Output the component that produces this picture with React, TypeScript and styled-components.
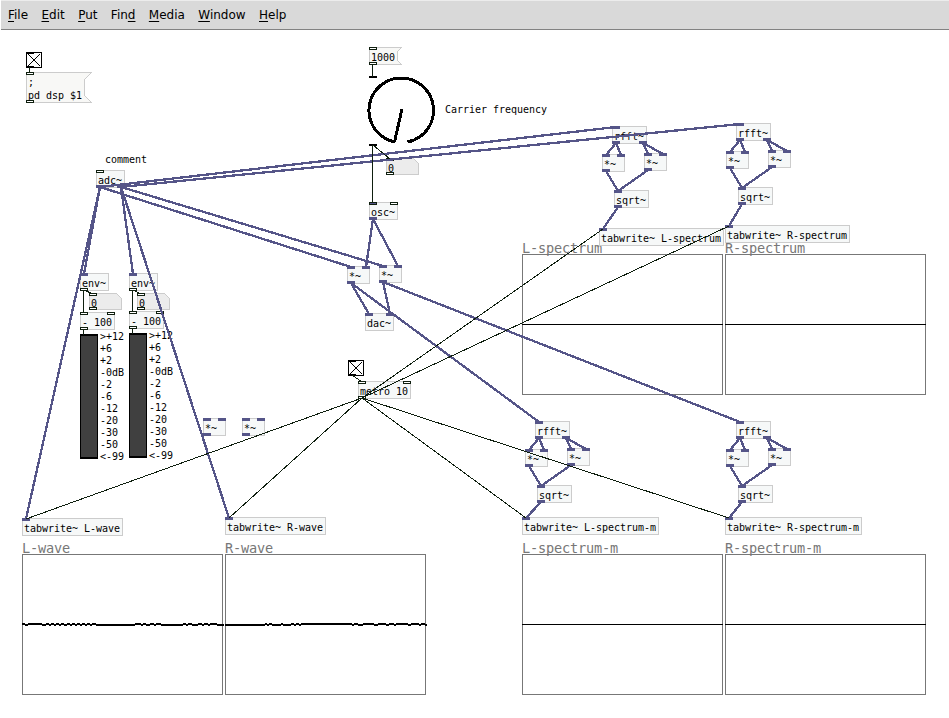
import React from "react";
import styled, { createGlobalStyle } from "styled-components";

const GlobalStyle = createGlobalStyle`
  body { margin: 0; background: #fff; overflow: hidden; }
`;

const SIGNAL = "#555588";
const CONTROL = "#0f1f0f";

const Window = styled.div`
  display: flex;
  flex-direction: column;
  width: 949px;
  height: 718px;
  background: #fff;
`;

const MenuBar = styled.nav`
  display: flex;
  flex: none;
  gap: 13.4px;
  height: 30px;
  box-sizing: border-box;
  margin-left: 1px;
  padding: 0 7px;
  background: #d9d9d9;
  border-top: 1px solid #ececec;
  border-bottom: 1px solid #828282;
  font: 12px/29px "DejaVu Sans", sans-serif;
  color: #000;
`;

const MenuItem = styled.span`
  u { text-underline-offset: 2px; text-decoration-thickness: 1px; }
`;

const Canvas = styled.main`
  position: relative;
  flex: 1;
  overflow: hidden;
  font: 10px/12px "DejaVu Sans Mono", monospace;
  letter-spacing: -0.02px;
  color: #000;
`;

/* Patch coordinates are window coordinates; the menu takes the first 30px. */
const at = (p: { $x: number; $y: number }) => `left: ${p.$x}px; top: ${p.$y - 30}px;`;

const Node = styled.div<{ $x: number; $y: number; $w: number }>`
  position: absolute;
  ${at}
  width: ${(p) => p.$w}px;
  height: 18px;
  box-sizing: border-box;
  border: 1px solid #ccc;
  background: #f6f8f8;
  padding: 4px 0 0 1px;
  white-space: pre;
`;

const Port = styled.i<{ $x: number; $bottom?: boolean; $kind: string }>`
  position: absolute;
  left: ${(p) => p.$x - 1}px;
  ${(p) => (p.$bottom ? "bottom: -1px;" : "top: -1px;")}
  width: 8px;
  height: 3px;
  box-sizing: border-box;
  border: 1px solid ${(p) => (p.$kind === "s" ? SIGNAL : CONTROL)};
  background: ${(p) => (p.$kind === "c" ? "#fff" : SIGNAL)};
`;

const Note = styled.span<{ $x: number; $y: number }>`
  position: absolute;
  ${at}
  white-space: pre;
`;

const ArrayPlot = styled.section<{ $x: number; $y: number }>`
  position: absolute;
  ${at}
  width: 201px;
  height: 141px;
  box-sizing: border-box;
  border: 1px solid #777;
`;

const ArrayName = styled.h2`
  position: absolute;
  left: -1px;
  top: -15px;
  margin: 0;
  font: 13.6px/16px "DejaVu Sans Mono", monospace;
  letter-spacing: -0.187px;
  color: #777;
`;

const Meter = styled.div<{ $x: number; $y: number }>`
  position: absolute;
  ${at}
  display: flex;
  gap: 2px;
`;

const MeterBar = styled.div`
  width: 18px;
  height: 125px;
  box-sizing: border-box;
  border: solid #000;
  border-width: 2px 1px;
  background: #404040;
`;

const MeterScale = styled.div`
  display: flex;
  flex-direction: column;
  margin-top: -3px;
`;

const Drawing = styled.svg`
  position: absolute;
  left: 0;
  top: 0;
  width: 949px;
  height: 688px;
  pointer-events: none;
`;

type Obj = [x: number, y: number, text: string, ins: string, outs: string];

const objects: Obj[] = [
  [96, 170, "adc~", "c", "ss"],
  [80, 273, "env~", "s", "c"],
  [129, 273, "env~", "s", "c"],
  [80, 312, "- 100", "cc", "c"],
  [129, 311, "- 100", "cc", "c"],
  [369, 202, "osc~", "mc", "s"],
  [347, 266, "*~", "ss", "s"],
  [379, 265, "*~", "ss", "s"],
  [365, 313, "dac~", "ss", ""],
  [358, 381, "metro 10", "cc", "c"],
  [203, 418, "*~", "ss", "s"],
  [242, 418, "*~", "ss", "s"],
  [612, 126, "rfft~", "s", "ss"],
  [602, 154, "*~", "ss", "s"],
  [644, 153, "*~", "ss", "s"],
  [614, 190, "sqrt~", "s", "s"],
  [599, 228, "tabwrite~ L-spectrum", "s", ""],
  [736, 123, "rfft~", "s", "ss"],
  [726, 151, "*~", "ss", "s"],
  [768, 150, "*~", "ss", "s"],
  [738, 187, "sqrt~", "s", "s"],
  [725, 225, "tabwrite~ R-spectrum", "s", ""],
  [535, 421, "rfft~", "s", "ss"],
  [525, 449, "*~", "ss", "s"],
  [567, 448, "*~", "ss", "s"],
  [537, 485, "sqrt~", "s", "s"],
  [522, 517, "tabwrite~ L-spectrum-m", "s", ""],
  [736, 421, "rfft~", "s", "ss"],
  [726, 449, "*~", "ss", "s"],
  [768, 448, "*~", "ss", "s"],
  [738, 485, "sqrt~", "s", "s"],
  [725, 517, "tabwrite~ R-spectrum-m", "s", ""],
  [22, 518, "tabwrite~ L-wave", "s", ""],
  [225, 517, "tabwrite~ R-wave", "s", ""],
];

const arrays: [number, number, string][] = [
  [22, 554, "L-wave"],
  [225, 554, "R-wave"],
  [522, 254, "L-spectrum"],
  [725, 254, "R-spectrum"],
  [522, 554, "L-spectrum-m"],
  [725, 554, "R-spectrum-m"],
];

const signalWires = [
  [100, 187, 84, 274], [100, 187, 26, 519], [100, 187, 351, 267], [100, 187, 616, 127],
  [121, 187, 133, 274], [121, 187, 229, 518], [121, 187, 383, 266], [121, 187, 740, 124],
  [373, 219, 366, 267], [373, 219, 398, 266],
  [351, 283, 369, 314], [351, 283, 539, 422],
  [383, 282, 390, 314], [383, 282, 740, 422],
  [616, 143, 606, 155], [616, 143, 621, 155], [643, 143, 648, 154], [643, 143, 663, 154],
  [606, 171, 618, 191], [648, 170, 618, 191], [618, 207, 603, 229],
  [740, 140, 730, 152], [740, 140, 745, 152], [767, 140, 772, 151], [767, 140, 787, 151],
  [730, 168, 742, 188], [772, 167, 742, 188], [742, 204, 729, 226],
  [539, 438, 529, 450], [539, 438, 544, 450], [566, 438, 571, 449], [566, 438, 586, 449],
  [529, 466, 541, 486], [571, 465, 541, 486], [541, 502, 526, 518],
  [740, 438, 730, 450], [740, 438, 745, 450], [767, 438, 772, 449], [767, 438, 787, 449],
  [730, 466, 742, 486], [772, 465, 742, 486], [742, 502, 729, 518],
];

const controlWires = [
  [29.5, 67, 29.5, 73], [372.5, 64, 372.5, 77], [372.5, 145, 372.5, 203], [373, 145, 390, 159],
  [83.5, 290, 83.5, 313], [84, 290, 93, 294], [132.5, 290, 132.5, 312], [133, 290, 141, 294],
  [83.5, 329, 83.5, 335], [132.5, 328, 132.5, 334],
  [352, 375, 362, 382],
  [362, 398, 26, 519], [362, 398, 229, 518], [362, 398, 526, 518], [362, 398, 729, 518],
  [362, 398, 603, 229], [362, 398, 729, 226],
];

const levels = [">+12", "+6", "+2", "-0dB", "-2", "-6", "-12", "-20", "-30", "-50", "<-99"];
const menus: [string, string, string][] = [
  ["", "F", "ile"], ["", "E", "dit"], ["", "P", "ut"], ["Fin", "d", ""],
  ["", "M", "edia"], ["", "W", "indow"], ["", "H", "elp"],
];

const portX = (i: number, n: number, w: number) => (n < 2 ? 0 : (i * (w - 8)) / (n - 1));

function PatchObject({ obj: [x, y, text, ins, outs] }: { obj: Obj }) {
  const w = Math.max(3, text.length) * 6 + 5;
  return (
    <Node $x={x} $y={y} $w={w}>
      {text}
      {[...ins].map((k, i) => <Port key={`i${i}`} $x={portX(i, ins.length, w)} $kind={k} />)}
      {[...outs].map((k, i) => <Port key={`o${i}`} $x={portX(i, outs.length, w)} $kind={k} $bottom />)}
    </Node>
  );
}

const Pin = ({ x, y }: { x: number; y: number }) => (
  <rect x={x + 0.5} y={y + 0.5} width="7" height="2" fill="#fff" stroke={CONTROL} />
);

function MessageShape({ x, y, w, h }: { x: number; y: number; w: number; h: number }) {
  const r = x + w + 0.5;
  const t = y + 0.5;
  const b = y + h - 0.5;
  return (
    <>
      <path
        d={`M${x + 0.5} ${t}H${r}L${r - 7} ${t + 7}V${b - 7}L${r} ${b}H${x + 0.5}Z`}
        fill="#f8f8f6"
        stroke="#ccc"
      />
      <Pin x={x} y={y} />
      <Pin x={x} y={y + h - 3} />
    </>
  );
}

function SmallMessageShape({ x, y }: { x: number; y: number }) {
  return (
    <>
      <path d={`M${x + 0.5} ${y + 0.5}h32l-4 4v9l4 4h-32z`} fill="#f8f8f6" stroke="#ccc" />
      <Pin x={x} y={y} />
      <Pin x={x} y={y + 15} />
    </>
  );
}

function FloatShape({ x, y }: { x: number; y: number }) {
  return (
    <>
      <path d={`M${x + 0.5} ${y + 0.5}h27l5 5v11h-32z`} fill="#ececec" stroke="#ccc" />
      <Pin x={x} y={y} />
      <Pin x={x} y={y + 14} />
    </>
  );
}

function Toggle({ x, y }: { x: number; y: number }) {
  return (
    <g stroke="#000" fill="#fff">
      <rect x={x + 0.5} y={y + 0.5} width="15" height="15" />
      <path d={`M${x + 2} ${y + 2}l12 12M${x + 14} ${y + 2}l-12 12`} />
      <path d={`M${x} ${y + 1.5}h8M${x} ${y + 14.5}h8`} />
    </g>
  );
}

/* Stretches where a trace sits one pixel lower, as [start, end] offsets along each array. */
const leftDips = [[3, 6], [20, 24], [27, 29], [32, 34], [37, 39], [42, 45], [48, 50], [53, 55], [58, 60], [63, 65], [68, 70], [74, 113], [119, 121], [124, 128], [132, 134], [139, 161], [164, 166], [170, 176], [180, 182], [186, 188], [195, 202]];
const rightDips = [[0, 40], [42, 44], [47, 56], [58, 66], [69, 71], [74, 76], [127, 129], [133, 138], [149, 153], [161, 164], [169, 171], [183, 186], [194, 196], [200, 202]];

function Trace({ x, end, dips }: { x: number; end: number; dips: number[][] }) {
  let d = "";
  let from = x;
  for (const [a, b] of dips) {
    if (x + a > from) d += `M${from} 624H${x + a}`;
    d += `M${x + a} 625H${x + b}`;
    from = x + b;
  }
  if (end > from) d += `M${from} 624H${end}`;
  return <path d={d} fill="none" stroke="#000" strokeWidth="2" />;
}

export default function App() {
  return (
    <Window>
      <GlobalStyle />
      <MenuBar>
        {menus.map(([pre, key, post]) => (
          <MenuItem key={pre + key + post}>{pre}<u>{key}</u>{post}</MenuItem>
        ))}
      </MenuBar>
      <Canvas>
        {arrays.map(([x, y, name]) => (
          <ArrayPlot key={`${name}-${y}`} $x={x} $y={y}><ArrayName>{name}</ArrayName></ArrayPlot>
        ))}
        {objects.map((o, i) => <PatchObject key={i} obj={o} />)}
        {[[80, 334], [129, 333]].map(([x, y]) => (
          <Meter key={x} $x={x} $y={y}>
            <MeterBar />
            <MeterScale>{levels.map((l) => <span key={l}>{l}</span>)}</MeterScale>
          </Meter>
        ))}
        <Drawing viewBox="0 30 949 688" shapeRendering="crispEdges">
          <MessageShape x={26} y={72} w={65} h={31} />
          <SmallMessageShape x={369} y={47} />
          <FloatShape x={89} y={293} />
          <FloatShape x={137} y={293} />
          <FloatShape x={386} y={158} />
          <Toggle x={26} y={52} />
          <Toggle x={348} y={360} />
        </Drawing>
        <Note $x={28} $y={77}>{";"}</Note>
        <Note $x={28} $y={90}>pd dsp $1</Note>
        <Note $x={371} $y={52}>1000</Note>
        <Note $x={105} $y={154}>comment</Note>
        <Note $x={445} $y={104}>Carrier frequency</Note>
        <Note $x={91} $y={298}>0</Note>
        <Note $x={139} $y={298}>0</Note>
        <Note $x={388} $y={163}>0</Note>
        <Drawing viewBox="0 30 949 688" shapeRendering="crispEdges">
          <g fill="none" stroke="#000" strokeWidth="3">
            <path d="M395 142A32.3 32.3 0 1 1 407.5 142" />
            <path d="M402 109L394.5 142" />
          </g>
          <path d="M369 77h8M369 145h8" stroke="#000" strokeWidth="2" />
          {[[522, 324], [725, 324], [522, 624], [725, 624]].map(([x, y]) => (
            <path key={`${x}-${y}`} d={`M${x} ${y + 0.5}h201`} stroke="#000" />
          ))}
          <Trace x={22} end={224} dips={leftDips} />
          <Trace x={225} end={427} dips={rightDips} />
          <g stroke={SIGNAL} strokeWidth="2.3">
            {signalWires.map(([a, b, c, d], i) => <line key={i} x1={a} y1={b} x2={c} y2={d} />)}
          </g>
          <g stroke={CONTROL}>
            {controlWires.map(([a, b, c, d], i) => <line key={i} x1={a} y1={b} x2={c} y2={d} />)}
          </g>
        </Drawing>
      </Canvas>
    </Window>
  );
}
